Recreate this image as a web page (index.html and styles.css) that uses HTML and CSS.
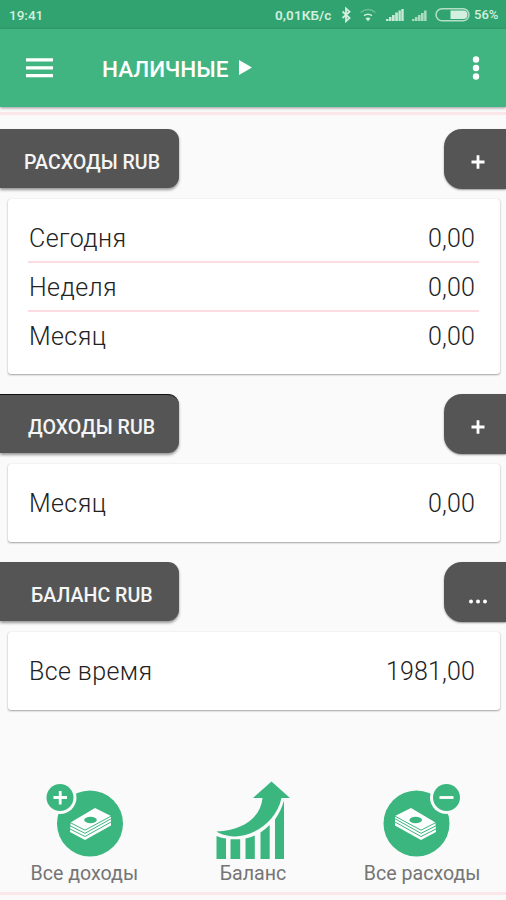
FILE: index.html
```html
<!DOCTYPE html>
<html lang="ru">
<head>
<meta charset="utf-8">
<title>Наличные</title>
<link rel="stylesheet" href="styles.css">
</head>
<body>
<div class="status">
  <span class="time">19:41</span>
  <span class="speed">0,01КБ/с</span>
  <svg class="status-icons" width="130" height="29" viewBox="0 0 130 29">
    <path d="M1.500 11.500l7 6.500-3.500 3.200V8.500l3.500 3.200-7 6.300" fill="none" stroke="#d3efdf" stroke-width="1.800"/>
    <g fill="none" stroke="#d3efdf" stroke-width="1.500">
      <path d="M19.500 12.500q8-6 15 0" opacity=".35"/>
      <path d="M23 15.700q4-3 8 0"/>
    </g>
    <path d="M24.500 18.500q2.500-2 5 0L27 21.300z" fill="#d3efdf"/>
    <path d="M45 21v-2h2.500v2zM48 21v-4h2.500v4zM51 21v-6h2.700v6zM54.200 21v-8.500h2.700V21zM57.500 21V10.500h2.300V21zM60.300 21V9h2.400v12z" fill="#c6ead6"/>
    <path d="M71 21v-2h2.500v2zM74 21v-4h2.500v4zM77 21v-6h2.600v6zM80 21v-8h2.700v8zM83.100 21V10.500h2.500V21z" fill="#a9dcc1"/>
    <rect x="95" y="8.700" width="33" height="12" rx="6" fill="none" stroke="#b5e0c8" stroke-width="1.500"/>
    <path d="M109.500 10.500H122q4.500 0 4.500 4.200T122 19h-12.500z" fill="#d3efdf"/>
  </svg>
  <span class="battery">56%</span>
</div>
<header class="appbar">
  <svg class="menu" width="27" height="20" viewBox="0 0 27 20"><path d="M0 1.800h27M0 9.800h27M0 17.600h27" stroke="#fff" stroke-width="3.300"/></svg>
  <h1 class="title">НАЛИЧНЫЕ</h1>
  <svg class="play" width="13" height="15" viewBox="0 0 13 15"><path d="M0 0l13 7.500L0 15z" fill="#fff"/></svg>
  <svg class="more" width="8" height="24" viewBox="0 0 8 24" fill="#fff"><circle cx="4" cy="3.500" r="3.200"/><circle cx="4" cy="12" r="3.200"/><circle cx="4" cy="20.500" r="3.200"/></svg>
</header>
<main class="content">
  <div class="section-head">
    <div class="chip chip-expense">РАСХОДЫ RUB</div>
    <div class="action"><svg width="14" height="14" viewBox="0 0 14 14"><path d="M0.500 7h13M7 .3v13.500" stroke="#fff" stroke-width="2.800"/></svg></div>
  </div>
  <section class="card card-list">
    <div class="row"><span class="label">Сегодня</span><span class="amount">0,00</span></div>
    <div class="row"><span class="label">Неделя</span><span class="amount">0,00</span></div>
    <div class="row"><span class="label">Месяц</span><span class="amount">0,00</span></div>
  </section>
  <div class="section-head">
    <div class="chip chip-income">ДОХОДЫ RUB</div>
    <div class="action"><svg width="14" height="14" viewBox="0 0 14 14"><path d="M0.500 7h13M7 .3v13.500" stroke="#fff" stroke-width="2.800"/></svg></div>
  </div>
  <section class="card">
    <div class="row"><span class="label">Месяц</span><span class="amount">0,00</span></div>
  </section>
  <div class="section-head">
    <div class="chip chip-balance">БАЛАНС RUB</div>
    <div class="action action-dots"><svg width="20" height="5" viewBox="0 0 20 5" fill="#fff"><circle cx="3" cy="2.500" r="2"/><circle cx="10" cy="2.500" r="2"/><circle cx="17" cy="2.500" r="2"/></svg></div>
  </div>
  <section class="card">
    <div class="row"><span class="label">Все время</span><span class="amount">1981,00</span></div>
  </section>
</main>
<nav class="tabs">
  <a class="tab tab-income">
    <svg width="84" height="80" viewBox="0 0 84 80">
      <circle cx="48" cy="43.500" r="33" fill="#3cb67f"/>
      <circle cx="18" cy="17.500" r="16.500" fill="#fafafa"/>
      <circle cx="18" cy="17.500" r="13.500" fill="#3cb67f"/>
      <path d="M11.500 17.500H25M18.200 11v13.500" stroke="#fff" stroke-width="2.800"/>
      <path d="M28.500 42.500L53 28l16 8v9.500L43 60l-15-8z" fill="#fff"/>
      <g fill="none" stroke="#3cb67f" stroke-width="1"><path d="M28 45.800l15 7.500 26-14.500M28 49l15 7.500L69 42"/></g>
      <path d="M28 42.500l15 7.700 26-14" fill="none" stroke="#3cb67f" stroke-width="1"/>
      <ellipse cx="48.500" cy="40" rx="6.300" ry="3.300" fill="#3cb67f"/>
    </svg>
    <span class="tab-label">Все доходы</span>
  </a>
  <a class="tab tab-balance">
    <svg width="76" height="80" viewBox="0 0 76 80" fill="#3cb67f">
      <path d="M1.500 51.500C28 50 45.500 38 47.500 18H38L56.500 1.500 75 18h-8.500C61 43 37 57 19 56.500 11 56 5 54 1.500 51.500z"/>
      <path d="M1.500 56q5 2 9.500 2.500V79H1.500zM15.500 59.200h9.700V79h-9.700zM30.500 58.500q5-1 9.300-3V79h-9.300zM45.500 52.500q5-3.500 9.200-7.500V79h-9.200zM60 39.500q6-8.500 9-19V79h-9z"/>
    </svg>
    <span class="tab-label">Баланс</span>
  </a>
  <a class="tab tab-expense">
    <svg width="84" height="80" viewBox="0 0 84 80">
      <circle cx="36.500" cy="43.500" r="33" fill="#3cb67f"/>
      <circle cx="66.500" cy="17.500" r="16.500" fill="#fafafa"/>
      <circle cx="66.500" cy="17.500" r="13.500" fill="#3cb67f"/>
      <path d="M59.500 17.500H73.500" stroke="#fff" stroke-width="2.800"/>
      <path d="M55.500 42.500L31 28l-16 8v9.500L41 60l15-8z" fill="#fff"/>
      <g fill="none" stroke="#3cb67f" stroke-width="1"><path d="M56 45.800l-15 7.500-26-14.500M56 49l-15 7.500L15 42"/></g>
      <path d="M56 42.500l-15 7.700-26-14" fill="none" stroke="#3cb67f" stroke-width="1"/>
      <ellipse cx="35.700" cy="40" rx="6.300" ry="3.300" fill="#3cb67f"/>
    </svg>
    <span class="tab-label">Все расходы</span>
  </a>
</nav>
</body>
</html>
```
FILE: styles.css
```css
* { box-sizing: border-box; }
body {
  margin: 0;
  width: 506px;
  height: 900px;
  overflow: hidden;
  display: flex;
  flex-direction: column;
  background: #fafafa;
  font-family: Roboto, "Noto Sans", sans-serif;
}
svg { display: block; flex: none; }
.status {
  height: 29px;
  flex: none;
  display: flex;
  align-items: center;
  padding: 0 8px 0 9px;
  background: #31a370;
  color: #d3efdf;
  font-size: 13.5px;
  font-weight: 500;
  white-space: nowrap;
}
.speed { margin-left: auto; letter-spacing: 0.1px; width: 58px; font-weight: 600; }
.status-icons { margin-left: 8px; }
.battery { margin-left: 3px; width: 24px; font-size: 13px; }
.appbar {
  height: 78px;
  flex: none;
  display: flex;
  align-items: center;
  padding: 0 26px;
  background: #41b581;
  box-shadow: 0 1px 3px rgba(0, 0, 0, 0.4);
  color: #fff;
}
.title { margin: 1px 0 0 49px; width: 127px; font-size: 22.5px; font-weight: 500; white-space: nowrap; }
.play { margin: -2px 0 0 10px; }
.more { margin-left: auto; }
.content { margin-top: 5px; padding-top: 14px; border-top: 3px solid #fbe6ea; }
.section-head { display: flex; justify-content: space-between; }
.chip {
  width: 179px;
  height: 59px;
  padding-top: 5px;
  border-radius: 0 11px 11px 0;
  background: #555;
  box-shadow: 0 2px 3px rgba(0, 0, 0, 0.4);
  color: #f5f5f5;
  font-size: 19.6px;
  font-weight: 500;
  line-height: 57px;
  white-space: nowrap;
}
.chip-expense { padding-left: 24px; }
.chip-income { padding-left: 28px; border-top: 1px solid #111; padding-top: 4px; }
.chip-balance { padding-left: 31px; }
.action {
  width: 62px;
  height: 60px;
  padding: 26px 0 0 27px;
  border-radius: 18px 0 0 18px;
  background: #555;
  box-shadow: 0 1px 2px rgba(0, 0, 0, 0.4);
}
.action-dots { padding: 37px 0 0 24px; }
.card {
  height: 78px;
  margin: 10px 6px 20px 8px;
  padding: 15px 21px 0 20px;
  border-radius: 3px;
  background: #fff;
  box-shadow: 0 1px 2px rgba(0, 0, 0, 0.35), 0 0 1px rgba(0, 0, 0, 0.15);
}
.card-list { height: 175px; }
.row {
  height: 49px;
  display: flex;
  justify-content: space-between;
  padding: 0 4px 0 1px;
  border-bottom: 2px solid #fcdce2;
  color: #222;
  font-size: 25px;
  font-weight: 300;
  line-height: 50px;
}
.label { letter-spacing: 0.4px; }
.amount { letter-spacing: 0.15px; }
.row:last-child { border-bottom: 0; }
.tabs { display: flex; height: 115px; margin-top: auto; margin-bottom: 5px; border-bottom: 3px solid #fbe6ea; }
.tab { width: 168.667px; display: flex; flex-direction: column; align-items: center; color: #757575; }
.tab-label { margin-top: 2px; font-size: 19.6px; line-height: 24px; white-space: nowrap; }
.tab-expense { padding-left: 1px; }
```
